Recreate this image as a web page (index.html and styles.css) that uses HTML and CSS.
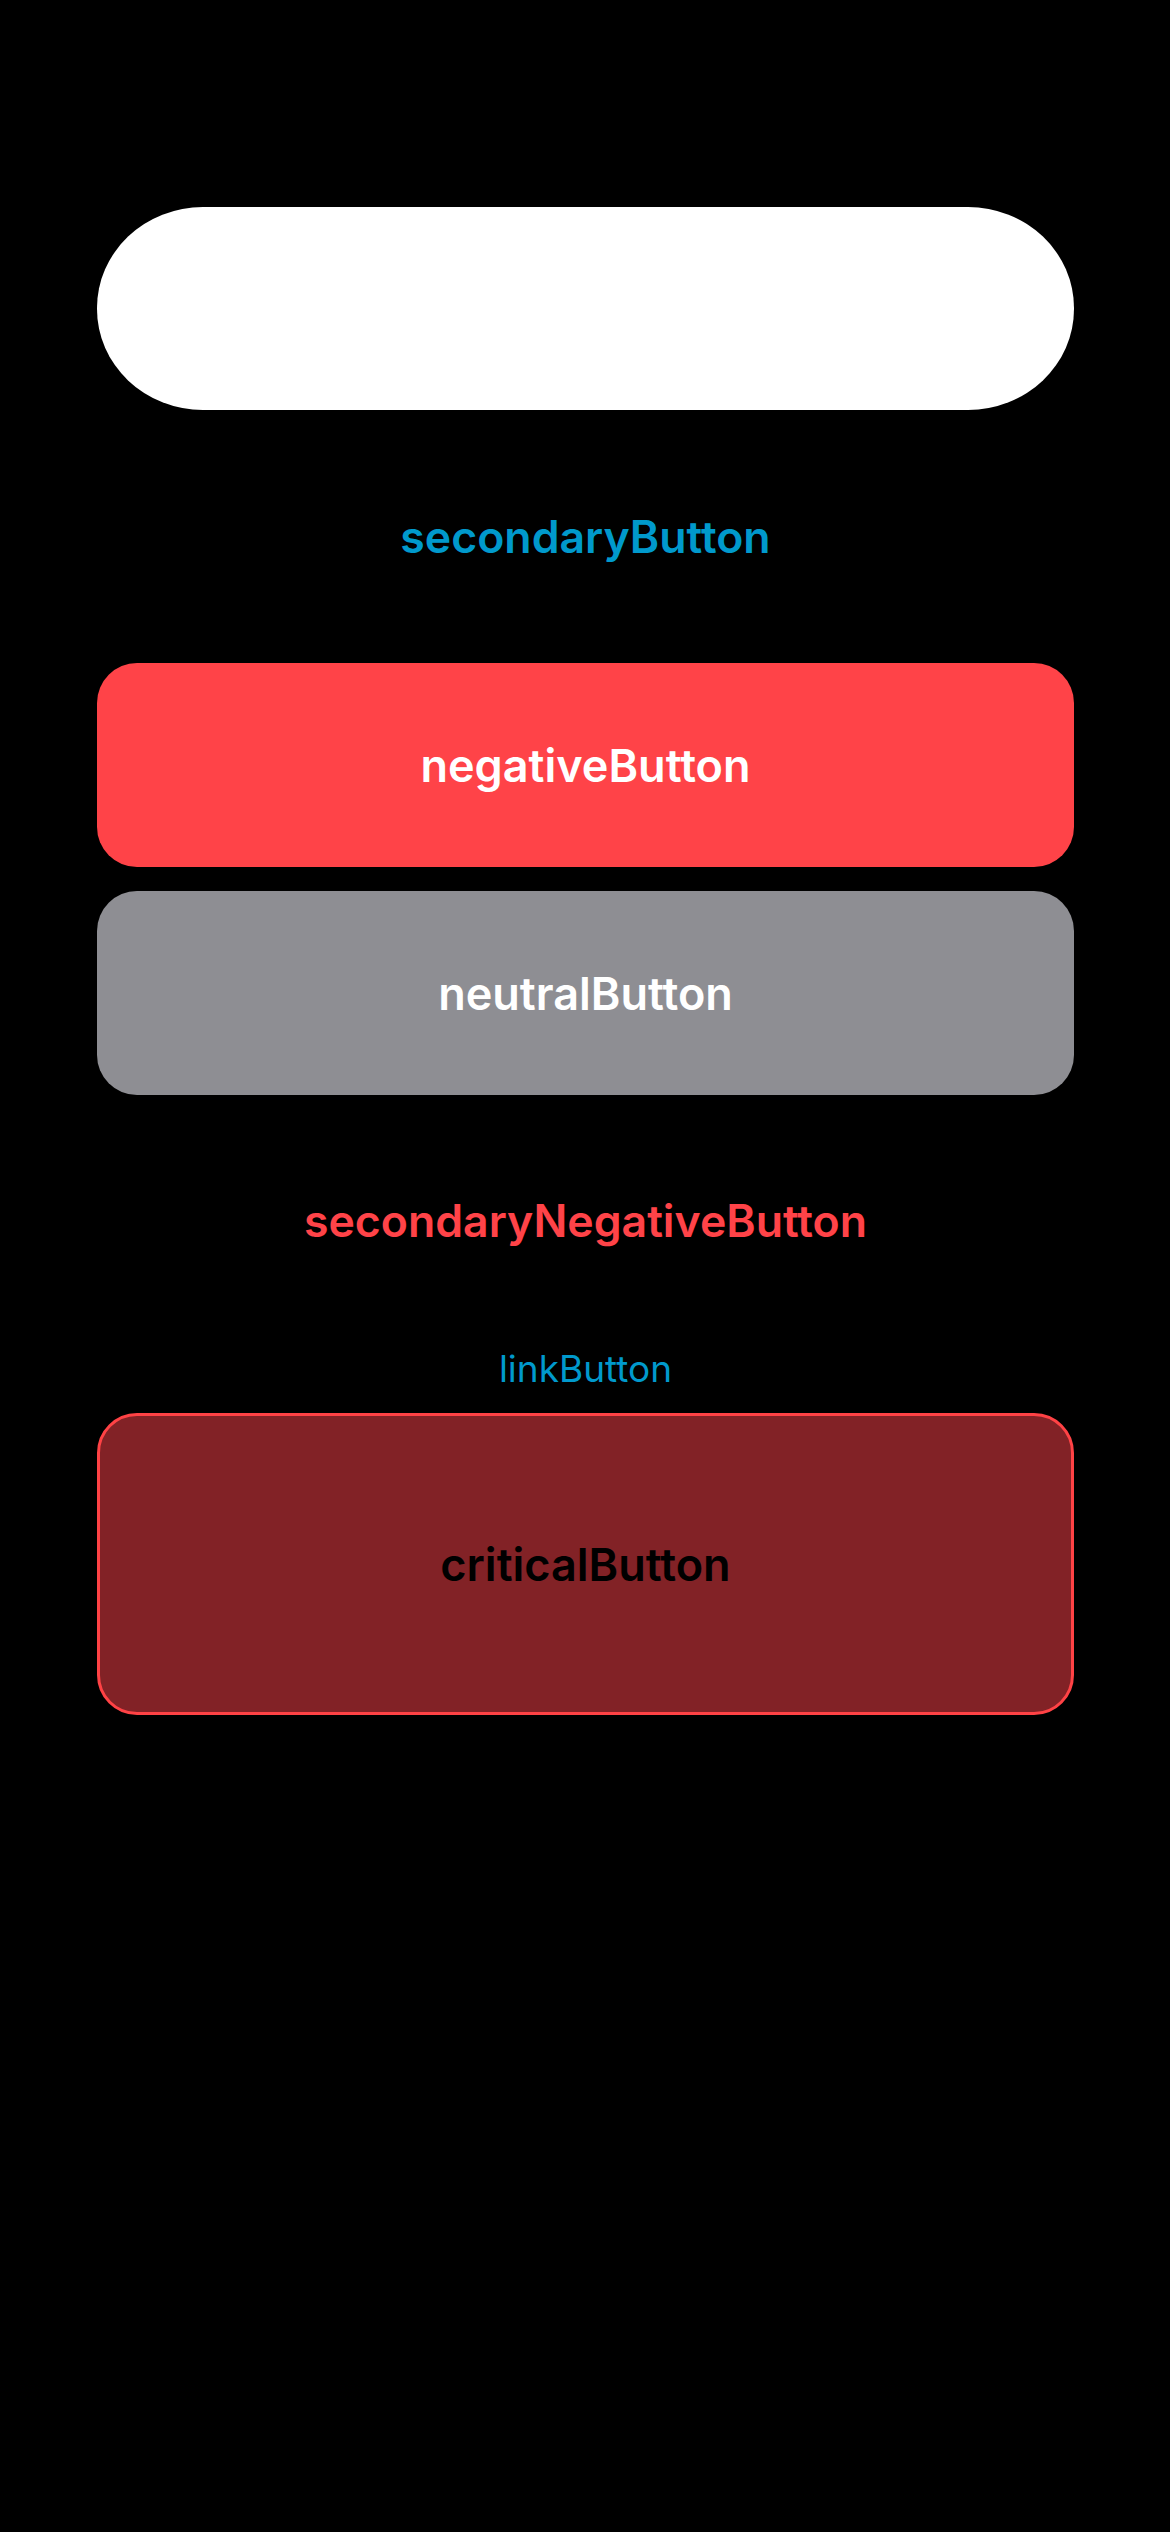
FILE: index.html
```html
<!DOCTYPE html>
<html>
<head>
<meta charset="utf-8">
<link rel="stylesheet" href="styles.css">
</head>
<body>
<main class="stack">
  <div class="btn pill"></div>
  <div class="text-btn secondary">secondaryButton</div>
  <div class="btn negative">negativeButton</div>
  <div class="btn neutral">neutralButton</div>
  <div class="text-btn sec-negative">secondaryNegativeButton</div>
  <div class="text-btn link">linkButton</div>
  <div class="btn critical">criticalButton</div>
</main>
</body>
</html>
```

FILE: styles.css
```css
html, body {
  margin: 0;
  padding: 0;
  background: #000;
}
body {
  width: 1170px;
  height: 2532px;
  font-family: Inter, "Noto Sans", sans-serif;
}
.stack {
  display: flex;
  flex-direction: column;
  padding: 207px 96px 0 97px;
}
.btn {
  display: flex;
  align-items: center;
  justify-content: center;
  height: 204px;
  border-radius: 40px;
  font-size: 45px;
  font-weight: 600;
  color: #fff;
  box-sizing: border-box;
}
.pill {
  height: 203px;
  background: #fff;
  border-radius: 106px / 101px;
}
.text-btn {
  display: flex;
  align-items: center;
  justify-content: center;
  font-size: 44.6px;
  font-weight: 600;
}
.secondary {
  height: 253px;
  color: #0099cc;
}
.negative {
  background: #ff4348;
}
.neutral {
  margin-top: 24px;
  background: #8e8e93;
}
.sec-negative {
  height: 252px;
  color: #ff4348;
}
.link {
  height: 42px;
  font-size: 37px;
  font-weight: 400;
  color: #0099cc;
  margin-bottom: 24px;
}
.critical {
  height: 302px;
  background: #822226;
  border: 3px solid #ff4245;
  color: #000;
  font-size: 45px;
}
```
